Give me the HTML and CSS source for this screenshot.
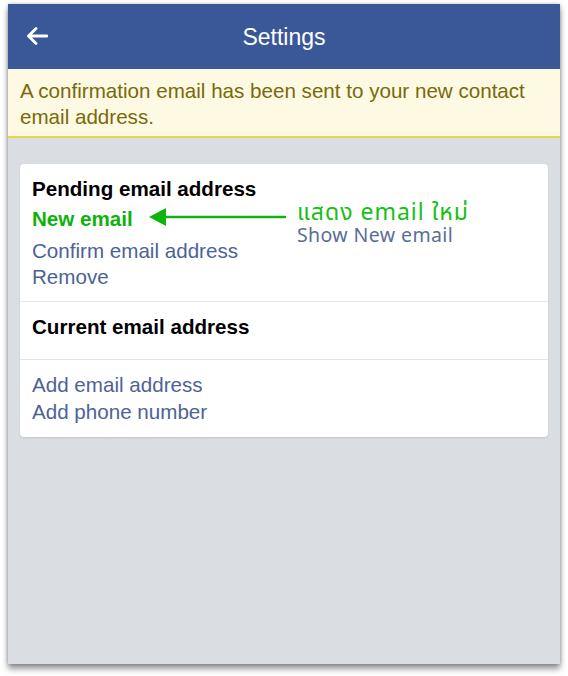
FILE: index.html
```html
<!DOCTYPE html>
<html>
<head>
<meta charset="utf-8">
<title>Settings</title>
<link rel="stylesheet" href="styles.css">
</head>
<body>
<div class="screen">
  <header class="topbar">
    <svg class="back" width="22" height="18" viewBox="0 0 22 18" aria-hidden="true">
      <path d="M21 9H3M10 1.5L2.5 9L10 16.5" fill="none" stroke="#fff" stroke-width="2.8" stroke-linecap="round" stroke-linejoin="round"/>
    </svg>
    <h1 class="title">Settings</h1>
  </header>
  <div class="notice">A confirmation email has been sent to your new contact email address.</div>
  <main class="content">
    <section class="card">
      <div class="group pending">
        <div class="label">Pending email address</div>
        <div class="new-email">New email</div>
        <a class="link confirm" href="#">Confirm email address</a>
        <a class="link" href="#">Remove</a>
        <div class="annotation">
          <svg class="pointer" width="138" height="20" viewBox="0 0 138 20" aria-hidden="true">
            <path d="M14 10H137" stroke="#0cb40c" stroke-width="2.4"/>
            <path d="M0 10L17 1V19Z" fill="#0cb40c"/>
          </svg>
          <div class="note">
            <div class="note-th">แสดง email ใหม่</div>
            <div class="note-en">Show New email</div>
          </div>
        </div>
      </div>
      <div class="group current">
        <div class="label">Current email address</div>
      </div>
      <div class="group adds">
        <a class="link" href="#">Add email address</a>
        <a class="link" href="#">Add phone number</a>
      </div>
    </section>
  </main>
</div>
</body>
</html>
```

FILE: styles.css
```css
html, body {
  margin: 0;
  padding: 0;
  background: #ffffff;
}
body {
  font-family: "Liberation Sans", Arial, sans-serif;
  padding: 4px 8px 12px 8px;
}
.screen {
  width: 552px;
  height: 660px;
  background: #dadde2;
  box-shadow: 0 5px 6px rgba(0, 0, 0, 0.4), 0 0 4px rgba(0, 0, 0, 0.25);
  display: flex;
  flex-direction: column;
  overflow: hidden;
}
.topbar {
  height: 65px;
  background: #3a5897;
  display: flex;
  align-items: center;
  justify-content: center;
  position: relative;
}
.back {
  position: absolute;
  left: 18px;
  top: 23px;
}
.title {
  margin: 0;
  color: #ffffff;
  font-size: 23px;
  font-weight: normal;
  padding-top: 1px;
}
.notice {
  background: #fef9e2;
  color: #776a0c;
  font-size: 20.6px;
  line-height: 26px;
  padding: 9px 12px 6px 12px;
  border-bottom: 2px solid #ead547;
}
.content {
  padding: 26px 12px;
}
.card {
  background: #ffffff;
  border-radius: 4px;
  box-shadow: 0 1px 2px rgba(0, 0, 0, 0.12);
}
.group {
  display: flex;
  flex-direction: column;
  padding: 12px 12px 12px 12px;
  font-size: 20.6px;
  line-height: 26px;
}
.group + .group {
  border-top: 1px solid #e5e6e9;
}
.pending {
  position: relative;
  padding-bottom: 11px;
}
.current {
  padding-bottom: 19px;
}
.label {
  font-weight: bold;
  color: #000000;
}
.new-email {
  font-weight: bold;
  color: #0db30d;
  margin-top: 4px;
}
.link {
  color: #4d6397;
  text-decoration: none;
}
.confirm {
  margin-top: 6px;
}
.adds .link + .link {
  margin-top: 1px;
}
.annotation {
  position: absolute;
  left: 129px;
  top: 33px;
  display: flex;
  align-items: flex-start;
  gap: 10px;
}
.pointer {
  margin-top: 10px;
}
.note {
  display: flex;
  flex-direction: column;
  margin-top: 5px;
}
.note-th {
  font-family: "Noto Sans Thai", "Noto Sans", sans-serif;
  color: #14c014;
  font-size: 23px;
  letter-spacing: 1px;
  line-height: 22px;
  white-space: nowrap;
}
.note-en {
  font-family: "Noto Sans", sans-serif;
  color: #5a6e95;
  font-size: 19.5px;
  letter-spacing: 0.4px;
  line-height: 22px;
  white-space: nowrap;
}
```
